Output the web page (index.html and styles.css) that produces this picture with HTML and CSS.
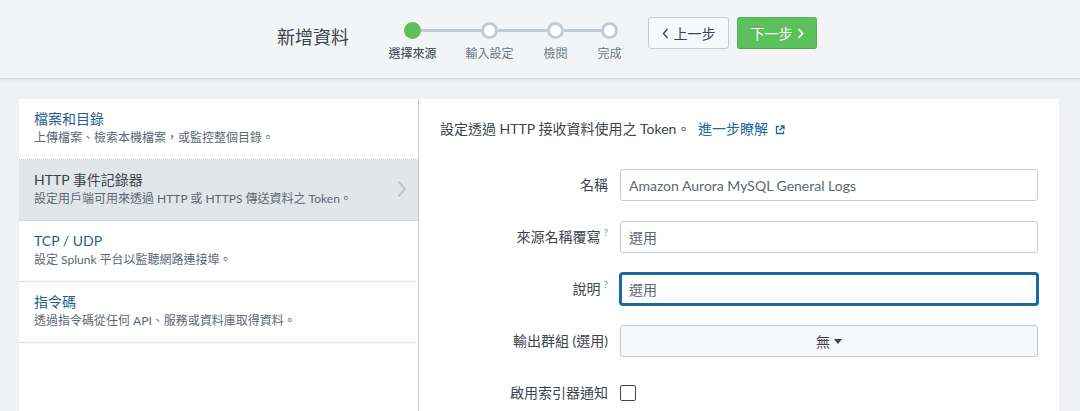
FILE: index.html
```html
<!DOCTYPE html>
<html lang="zh-Hant">
<head>
<meta charset="utf-8">
<title>新增資料</title>
<link rel="stylesheet" href="styles.css">
</head>
<body>
<header class="header">
  <div class="title">新增資料</div>
  <div class="steps">
    <span class="dot done c1"></span>
    <span class="line c2"></span>
    <span class="dot c3"></span>
    <span class="line c4"></span>
    <span class="dot c5"></span>
    <span class="line c6"></span>
    <span class="dot c7"></span>
    <span class="step-label active c1">選擇來源</span>
    <span class="step-label c3">輸入設定</span>
    <span class="step-label c5">檢閱</span>
    <span class="step-label c7">完成</span>
  </div>
  <div class="nav">
    <button class="btn btn-prev"><svg class="chev" width="7" height="11" viewBox="0 0 7 11"><path d="M5.5 1 L1.5 5.5 L5.5 10" fill="none" stroke="#3c444d" stroke-width="1.4"/></svg>上一步</button>
    <button class="btn btn-next">下一步<svg class="chev after" width="7" height="11" viewBox="0 0 7 11"><path d="M1.5 1 L5.5 5.5 L1.5 10" fill="none" stroke="#fff" stroke-width="1.8"/></svg></button>
  </div>
</header>
<main class="main">
  <aside class="sidebar">
    <div class="item">
      <div class="item-title">檔案和目錄</div>
      <div class="item-desc">上傳檔案、檢索本機檔案，或監控整個目錄。</div>
    </div>
    <div class="item active">
      <div class="item-title">HTTP 事件記錄器</div>
      <div class="item-desc">設定用戶端可用來透過 HTTP 或 HTTPS 傳送資料之 Token。</div>
      <svg class="item-chev" width="10" height="18" viewBox="0 0 10 18"><path d="M1.5 1.5 L8 9 L1.5 16.5" fill="none" stroke="#bcc4cc" stroke-width="2"/></svg>
    </div>
    <div class="item">
      <div class="item-title">TCP / UDP</div>
      <div class="item-desc">設定 Splunk 平台以監聽網路連接埠。</div>
    </div>
    <div class="item">
      <div class="item-title">指令碼</div>
      <div class="item-desc">透過指令碼從任何 API、服務或資料庫取得資料。</div>
    </div>
  </aside>
  <section class="content">
    <p class="intro">設定透過 HTTP 接收資料使用之 Token。 <a class="link">進一步瞭解<svg class="ext" width="10" height="10" viewBox="0 0 10 10"><path d="M4 1.5 H1.5 V8.5 H8.5 V6 M5.5 1 H9 V4.5 M9 1 L4.5 5.5" fill="none" stroke="#1a6a9f" stroke-width="1.3"/></svg></a></p>
    <div class="form">
      <label class="label">名稱</label>
      <input class="input" type="text" value="Amazon Aurora MySQL General Logs">
      <label class="label">來源名稱覆寫<sup class="help">?</sup></label>
      <input class="input" type="text" placeholder="選用">
      <label class="label">說明<sup class="help">?</sup></label>
      <input class="input focused" type="text" placeholder="選用">
      <label class="label">輸出群組 (選用)</label>
      <div class="select">無<svg class="caret" width="8" height="5" viewBox="0 0 8 5"><path d="M0 0 H8 L4 5 Z" fill="#3c444d"/></svg></div>
      <label class="label">啟用索引器通知</label>
      <div class="check-wrap"><span class="checkbox"></span></div>
    </div>
  </section>
</main>
</body>
</html>
```

FILE: styles.css
```css
html, body {
  margin: 0;
  padding: 0;
}
body {
  font-family: Lato, "Noto Sans CJK TC", sans-serif;
  background: #eff1f3;
  color: #3c444d;
  height: 411px;
  overflow: hidden;
}

/* Header */
.header {
  height: 78px;
  background: #f2f4f5;
  border-bottom: 1px solid #d6dbe0;
  box-shadow: 0 1px 2px rgba(0, 0, 0, 0.06);
  display: flex;
  align-items: flex-start;
  padding-left: 277px;
  box-sizing: content-box;
}
.title {
  font-size: 18px;
  line-height: 22px;
  margin-top: 26px;
  color: #3c444d;
  width: 72px;
  white-space: nowrap;
}
.steps {
  display: grid;
  grid-template-columns: 17px 60px 17px 49px 17px 37px 17px;
  grid-template-rows: 17px 14px;
  row-gap: 8px;
  align-items: center;
  margin-top: 22px;
  margin-left: 55px;
}
.c1 { grid-column: 1; }
.c2 { grid-column: 2; }
.c3 { grid-column: 3; }
.c4 { grid-column: 4; }
.c5 { grid-column: 5; }
.c6 { grid-column: 6; }
.c7 { grid-column: 7; }
.dot {
  grid-row: 1;
  width: 17px;
  height: 17px;
  box-sizing: border-box;
  border-radius: 50%;
  background: #fff;
  border: 3px solid #c3cbd4;
}
.dot.done {
  background: #5cc05c;
  border-color: #5cc05c;
}
.line {
  grid-row: 1;
  height: 3px;
  background: #c3cbd4;
}
.step-label {
  grid-row: 2;
  justify-self: center;
  white-space: nowrap;
  font-size: 12px;
  line-height: 14px;
  color: #6b7785;
}
.step-label.active {
  color: #3c444d;
}
.nav {
  display: flex;
  gap: 8px;
  margin-top: 17px;
  margin-left: 30px;
}
.btn {
  height: 32px;
  box-sizing: border-box;
  border-radius: 3px;
  font-family: inherit;
  font-size: 14px;
  display: inline-flex;
  align-items: center;
  justify-content: center;
  padding: 0;
  cursor: pointer;
}
.btn-prev {
  width: 81px;
  background: #f7f8fa;
  border: 1px solid #c3cbd4;
  color: #3c444d;
}
.btn-next {
  width: 80px;
  background: #5cc05c;
  border: 1px solid #55b455;
  border-bottom-color: #4ea44e;
  color: #fff;
}
.chev {
  margin-right: 5px;
}
.chev.after {
  margin-right: 0;
  margin-left: 4px;
}

/* Main */
.main {
  display: flex;
  padding: 20px 21px 0 19px;
  height: 332px;
}
.sidebar {
  width: 399px;
  background: #fff;
  border-right: 1px solid #c3cbd4;
  flex: none;
}
.item {
  position: relative;
  padding: 10px 15px 12px;
  border-bottom: 1px dotted #c3cbd4;
}
.item-title {
  font-size: 14px;
  line-height: 20px;
  color: #1f5f8b;
}
.item-desc {
  font-size: 12px;
  line-height: 18px;
  color: #5c6773;
}
.item.active {
  background: #e1e6eb;
}
.item.active .item-title {
  color: #3c444d;
}
.item-chev {
  position: absolute;
  right: 11px;
  top: 20px;
}

.content {
  flex: 1;
  background: #fff;
  padding: 0 21px;
}
.intro {
  margin: 0;
  padding-top: 20px;
  font-size: 14px;
  line-height: 20px;
  color: #3c444d;
}
.link {
  color: #1a6a9f;
  margin-left: 4px;
}
.ext {
  margin-left: 7px;
  vertical-align: -1px;
}
.form {
  display: grid;
  grid-template-columns: 168px 1fr;
  column-gap: 12px;
  row-gap: 20px;
  align-items: center;
  margin-top: 30px;
}
.label {
  text-align: right;
  font-size: 14px;
  line-height: 20px;
  color: #3c444d;
  white-space: nowrap;
}
.help {
  font-size: 10px;
  color: #8a96a3;
  margin-left: 3px;
  vertical-align: 6px;
  line-height: 0;
}
.input {
  height: 32px;
  box-sizing: border-box;
  border: 1px solid #c3cbd4;
  border-radius: 3px;
  padding: 0 8px;
  font-family: inherit;
  font-size: 14px;
  color: #5c6773;
  background: #fff;
  width: 100%;
  outline: none;
}
.input::placeholder {
  color: #5c6773;
  opacity: 1;
}
.input.focused {
  border: 2px solid #1a6a9f;
  box-shadow: 0 0 0 1px #1a6a9f;
  padding: 0 7px;
}
.select {
  height: 32px;
  box-sizing: border-box;
  border: 1px solid #c3cbd4;
  border-radius: 3px;
  background: #f7f8fa;
  display: flex;
  align-items: center;
  justify-content: center;
  font-size: 14px;
  color: #3c444d;
}
.caret {
  margin-left: 4px;
}
.check-wrap {
  height: 32px;
  display: flex;
  align-items: center;
}
.checkbox {
  width: 16px;
  height: 16px;
  box-sizing: border-box;
  border: 1px solid #3c444d;
  border-radius: 2px;
  background: #fff;
}
```
